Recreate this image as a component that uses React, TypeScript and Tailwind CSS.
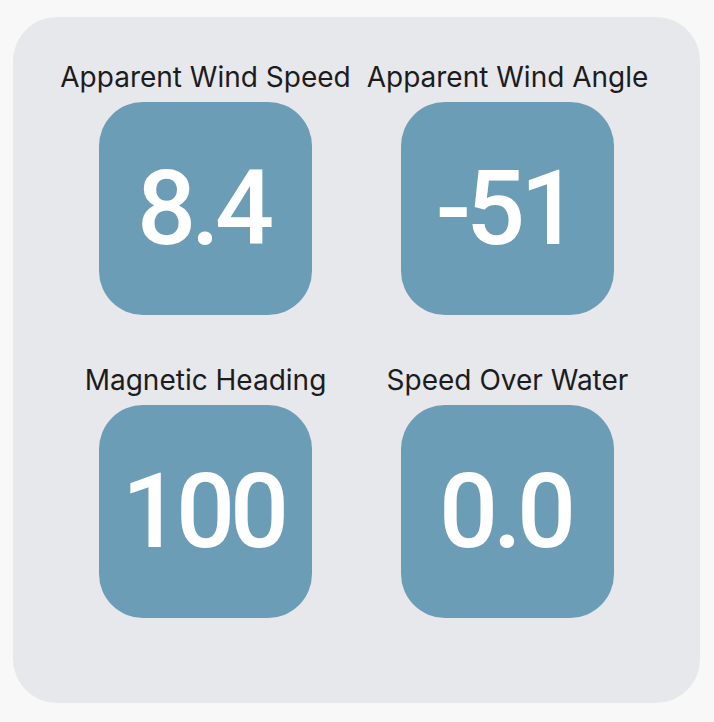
const readings = [
  { label: "Apparent Wind Speed", value: "8.4" },
  { label: "Apparent Wind Angle", value: "-51" },
  { label: "Magnetic Heading", value: "100" },
  { label: "Speed Over Water", value: "0.0" },
];

function Gauge({ label, value }: { label: string; value: string }) {
  return (
    <div className="flex flex-col items-center">
      <div className="text-[28px] leading-[36px] text-[#1c1c1c] font-['Inter',sans-serif] whitespace-nowrap">
        {label}
      </div>
      <div className="mt-[7px] w-[213px] h-[213px] rounded-[44px] bg-[#6c9db6] flex items-center justify-center">
        <span className="text-[104px] leading-none font-medium text-white font-['Roboto',sans-serif] tracking-[-5px] pr-[5px]">
          {value}
        </span>
      </div>
    </div>
  );
}

export default function App() {
  return (
    <div className="w-[714px] h-[722px] bg-[#f8f8f8] pt-[17px] pl-[13px]">
      <div className="w-[687px] h-[686px] rounded-[44px] bg-[#e7e8ec] pt-[42px]">
        <div className="w-[604px] mx-auto grid grid-cols-2 gap-y-[47px]">
          {readings.map((r) => (
            <Gauge key={r.label} label={r.label} value={r.value} />
          ))}
        </div>
      </div>
    </div>
  );
}
